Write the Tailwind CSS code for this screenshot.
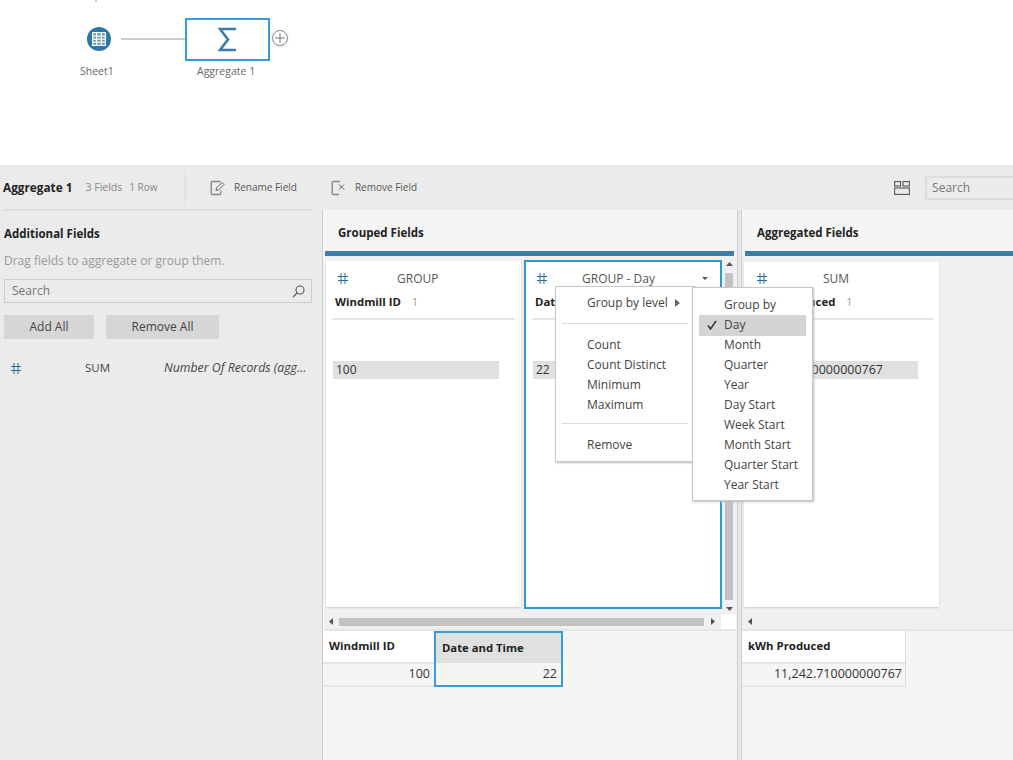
<!DOCTYPE html>
<html lang="en">
  <head>
    <meta charset="UTF-8" />
    <title>Aggregate 1</title>
    <script src="https://cdn.jsdelivr.net/npm/@tailwindcss/browser@4"></script>
  </head>
  <body class="w-[1013px] h-[760px] overflow-hidden bg-white text-[#333] text-[12px] font-['Open_Sans',sans-serif]">
    <!-- Flow canvas -->
    <div class="relative h-[165px] bg-white">
      <div class="absolute left-[95px] top-0 w-[2px] h-[2px] bg-[#ccc]"></div>
      <div class="absolute left-[87px] top-[27px] w-6 h-6 rounded-full bg-[#2e76a3] flex items-center justify-center">
        <svg width="14" height="14" viewBox="0 0 14 14" fill="none" stroke="#fff" stroke-width="1.2">
          <rect x="0.6" y="0.6" width="12.8" height="12.8" fill="#fff" fill-opacity="0.25" />
          <path d="M0 4.2H14M0 7.2H14M0 10.2H14M4.6 0V14M9.4 0V14" />
        </svg>
      </div>
      <div class="absolute left-[121px] top-[38px] w-[65px] h-[2px] bg-[#ccc]"></div>
      <div class="absolute left-[185px] top-[18px] w-[85px] h-[43px] border-2 border-[#3a9bdc] bg-white flex items-center justify-center">
        <svg width="19" height="25" viewBox="0 0 19 25" fill="none" stroke="#3a7ca5" stroke-width="2.6">
          <path d="M18 2H2L10 12.5L2 23H18" />
        </svg>
      </div>
      <div class="absolute left-[272px] top-[30px] w-4 h-4 rounded-full border border-[#888] shadow-sm flex items-center justify-center">
        <svg width="10" height="10" viewBox="0 0 10 10" stroke="#777" stroke-width="1"><path d="M5 0V10M0 5H10" /></svg>
      </div>
      <div class="absolute left-[80px] top-[64px] text-[10.5px] text-[#666]">Sheet1</div>
      <div class="absolute left-[197px] top-[64px] text-[10.5px] text-[#666]">Aggregate 1</div>
    </div>

    <!-- Toolbar -->
    <div class="h-[45px] bg-[#ebebeb] flex items-center whitespace-nowrap">
      <div class="w-[186px] shrink-0 h-[36px] pl-[3px] flex items-center border-r-2 border-[#e3e3e3]">
        <span class="font-bold text-[11.8px] text-[#222]">Aggregate 1</span>
        <span class="ml-[13px] text-[10.5px] text-[#888]">3 Fields</span>
        <span class="ml-[7px] text-[10px] text-[#888]">1 Row</span>
      </div>
      <svg class="ml-[24px] shrink-0" width="16" height="16" viewBox="0 0 16 16" fill="none" stroke="#888" stroke-width="1.4">
        <path d="M10.5 1.5H2.5Q1.2 1.5 1.2 2.8V13.2Q1.2 14.5 2.5 14.5H9.5Q10.8 14.5 10.8 13.2V10.5" />
        <path stroke="#666" stroke-width="1" d="M6 10.5L6.5 8L12 2.5L14 4.5L8.5 10Z" />
      </svg>
      <span class="ml-2 text-[10px] text-[#555]">Rename Field</span>
      <svg class="ml-[34px] shrink-0" width="16" height="16" viewBox="0 0 16 16" fill="none" stroke="#888" stroke-width="1.4">
        <path d="M9 1.5H2.5Q1.2 1.5 1.2 2.8V13.2Q1.2 14.5 2.5 14.5H8" />
        <path stroke="#666" stroke-width="1" d="M8 4.5L13 9.5M13 4.5L8 9.5" />
      </svg>
      <span class="ml-2 text-[10px] text-[#555]">Remove Field</span>
      <svg class="ml-[477px] shrink-0" width="16" height="14" viewBox="0 0 16 14" fill="none" stroke="#555" stroke-width="1.1">
        <rect x="0.6" y="0.6" width="6" height="4.4" />
        <rect x="9" y="0.6" width="6.4" height="4.4" />
        <rect x="0.6" y="7" width="14.8" height="6.4" />
      </svg>
      <div class="ml-[15px] w-[100px] h-[24px] shrink-0 border-2 border-[#dcdcdc] flex items-center pl-[5px] text-[#777]">Search</div>
    </div>

    <!-- Main area -->
    <div class="flex h-[550px]">
      <!-- Additional fields -->
      <div class="w-[322px] shrink-0 bg-[#ebebeb] whitespace-nowrap">
        <div class="ml-[3px] w-[310px] h-[2px] -mt-px bg-[#dedede]"></div>
        <div class="pl-[4px] pt-[14px] font-bold text-[11.5px] text-[#222] leading-[17px]">Additional Fields</div>
        <div class="pl-[4px] pt-[10px] text-[#999] leading-[17px]">Drag fields to aggregate or group them.</div>
        <div class="ml-[4px] mt-[10px] w-[308px] h-[24px] border border-[#ccc] flex items-center justify-between pl-[7px] pr-[6px] text-[#777]">
          <span>Search</span>
          <svg width="13" height="13" viewBox="0 0 13 13" fill="none" stroke="#555" stroke-width="1.1"><circle cx="8" cy="5" r="4" /><path d="M5 8L1 12" /></svg>
        </div>
        <div class="flex pl-[4px] pt-[12px] gap-[12px] text-[#444]">
          <div class="w-[90px] h-[24px] bg-[#d6d6d6] flex items-center justify-center">Add All</div>
          <div class="w-[113px] h-[24px] bg-[#d6d6d6] flex items-center justify-center">Remove All</div>
        </div>
        <div class="flex items-center h-[20px] mt-[19px]">
          <svg class="ml-[11px]" width="10" height="11" viewBox="0 0 10 11" stroke="#2b6f96" stroke-width="1"><path d="M3 0V11M7 0V11M0 3.5H10M0 7.5H10" /></svg>
          <span class="ml-[64px] text-[11.5px] text-[#444]">SUM</span>
          <span class="ml-[54px] italic text-[12.3px] text-[#444]">Number Of Records (agg...</span>
        </div>
      </div>

      <!-- Grouped fields -->
      <div class="w-[415px] shrink-0 border-l border-[#ccc] bg-[#f5f5f5] flex flex-col">
        <div class="h-[40px] mt-px pl-[15px] pt-[4px] flex items-center font-bold text-[11.5px] text-[#222]">Grouped Fields</div>
        <div class="ml-[2px] mr-[3px] h-[5px] bg-[#3d7ca8]"></div>
        <div class="ml-[2px] mr-[1px] h-[358px] bg-[#f0f0f0] flex">
          <div class="w-[195px] h-[346px] mt-[5px] bg-white shadow-[0_1px_2px_#ccc] ml-px">
            <div class="flex items-center h-[30px] mt-[1px] pt-[3px] pl-[12px]">
              <svg width="10" height="11" viewBox="0 0 10 11" stroke="#2b6f96" stroke-width="1"><path d="M3 0V11M7 0V11M0 3.5H10M0 7.5H10" /></svg>
              <span class="ml-[49px] text-[#555]">GROUP</span>
            </div>
            <div class="pl-[9px] pt-[1px] h-[26px] font-bold text-[11.4px] text-[#222] whitespace-nowrap">Windmill ID <span class="ml-2 font-normal text-[10.5px] text-[#999]">1</span></div>
            <div class="mx-[6px] h-[2px] bg-[#e6e6e6]"></div>
            <div class="ml-[7px] mt-[41px] w-[166px] h-[18px] bg-[#e0e0e0] pl-[3px] flex items-center text-[#333]">100</div>
          </div>
          <div class="ml-[3px] w-[198px] h-[349px] mt-[4px] bg-white border-2 border-[#2f97d8]">
            <div class="flex items-center h-[30px] pt-[3px] pl-[11px]">
              <svg width="10" height="11" viewBox="0 0 10 11" stroke="#2b6f96" stroke-width="1"><path d="M3 0V11M7 0V11M0 3.5H10M0 7.5H10" /></svg>
              <span class="ml-[35px] text-[#555]">GROUP - Day</span>
              <svg class="ml-[47px]" width="6" height="3" viewBox="0 0 6 3" fill="#555"><path d="M0 0H6L3 3Z" /></svg>
            </div>
            <div class="pl-[9px] pt-[1px] h-[26px] font-bold text-[11.4px] text-[#222] whitespace-nowrap">Date and Time</div>
            <div class="mx-[6px] h-[2px] bg-[#e6e6e6]"></div>
            <div class="ml-[7px] mt-[41px] w-[166px] h-[18px] bg-[#e0e0e0] pl-[3px] flex items-center text-[#333]">22</div>
          </div>
          <!-- Vertical scrollbar -->
          <div class="ml-px w-[12px] h-[352px] mt-[5px] flex flex-col items-center justify-between">
            <svg class="mt-[1px]" width="7" height="4" viewBox="0 0 7 4" fill="#555"><path d="M0 4H7L3.5 0Z" /></svg>
            <div class="w-[8px] h-[327px] bg-[#c2c2c2]"></div>
            <svg class="mb-[2px]" width="7" height="4" viewBox="0 0 7 4" fill="#555"><path d="M0 0H7L3.5 4Z" /></svg>
          </div>
        </div>
        <!-- Horizontal scrollbar -->
        <div class="ml-[2px] mr-[1px] h-[15px] bg-[#f0f0f0] flex items-center border-b-2 border-[#e6e6e6] box-content">
          <svg class="ml-[4px]" width="4" height="7" viewBox="0 0 4 7" fill="#555"><path d="M4 0V7L0 3.5Z" /></svg>
          <div class="ml-[6px] w-[366px] h-[8px] bg-[#c2c2c2]"></div>
          <svg class="ml-[7px]" width="4" height="7" viewBox="0 0 4 7" fill="#555"><path d="M0 0V7L4 3.5Z" /></svg>
          <div class="ml-[6px] w-[15px] h-[15px] bg-white"></div>
        </div>
        <!-- Grouped profile table -->
        <div class="flex whitespace-nowrap">
          <div class="w-[111px]">
            <div class="h-[31px] bg-white font-bold text-[11.4px] text-[#222] pl-[6px] pb-[2px] flex items-center">Windmill ID</div>
            <div class="h-[25px] border-t-2 border-b-2 border-[#e6e6e6] flex items-center justify-end pr-[4px] text-[12.5px]">100</div>
          </div>
          <div class="w-[129px] h-[56px] border-2 border-[#3a9bdc]">
            <div class="h-[30px] bg-[#e0e0e0] font-bold text-[11.3px] text-[#222] pl-[6px] flex items-center">Date and Time</div>
            <div class="h-[22px] flex items-center justify-end pr-[4px] text-[12.5px]">22</div>
          </div>
        </div>
      </div>

      <!-- Aggregated fields -->
      <div class="w-[276px] shrink-0 border-l border-[#ccc] flex">
        <div class="w-[3px] bg-[#e8e8e8] border-r border-[#ccc] box-content"></div>
        <div class="flex-1 bg-[#f5f5f5] flex flex-col">
          <div class="h-[40px] mt-px pl-[15px] pt-[4px] flex items-center font-bold text-[11.5px] text-[#222]">Aggregated Fields</div>
          <div class="ml-[3px] h-[5px] bg-[#3d7ca8]"></div>
          <div class="h-[358px] bg-[#f0f0f0] pt-[6px]">
            <div class="ml-[2px] w-[195px] h-[345px] bg-white shadow-[0_1px_2px_#ccc]">
              <div class="flex items-center h-[30px] pt-[3px] pl-[13px]">
                <svg width="10" height="11" viewBox="0 0 10 11" stroke="#2b6f96" stroke-width="1"><path d="M3 0V11M7 0V11M0 3.5H10M0 7.5H10" /></svg>
                <span class="ml-[56px] text-[#555]">SUM</span>
              </div>
              <div class="pl-[9px] pt-[1px] h-[26px] font-bold text-[11.4px] text-[#222] whitespace-nowrap">kWh Produced <span class="ml-2 font-normal text-[10.5px] text-[#999]">1</span></div>
              <div class="mx-[6px] h-[2px] bg-[#e6e6e6]"></div>
              <div class="ml-[8px] mt-[41px] w-[166px] h-[18px] bg-[#e0e0e0] pl-[3px] flex items-center text-[12.5px] text-[#333] whitespace-nowrap">11,242.710000000767</div>
            </div>
          </div>
          <div class="h-[15px] bg-[#f0f0f0] flex items-center border-b-2 border-[#e6e6e6] box-content">
            <svg class="ml-[6px]" width="4" height="7" viewBox="0 0 4 7" fill="#555"><path d="M4 0V7L0 3.5Z" /></svg>
          </div>
          <div class="w-[164px] whitespace-nowrap border-r border-[#ddd]">
            <div class="h-[31px] bg-white font-bold text-[11.4px] text-[#222] pl-[6px] pb-[2px] flex items-center">kWh Produced</div>
            <div class="h-[25px] border-t-2 border-b-2 border-[#e6e6e6] flex items-center justify-end pr-[3px] text-[12.5px]">11,242.710000000767</div>
          </div>
        </div>
      </div>
    </div>

    <!-- Field menu -->
    <div class="absolute left-[555px] top-[286px] w-[140px] h-[176px] bg-white border border-[#c8c8c8] shadow-[1px_1px_2px_#bbb] text-[#444]">
      <div class="h-[20px] mt-[6px] pl-[31px] flex items-center">Group by level
        <svg class="ml-[7px]" width="5" height="8" viewBox="0 0 5 8" fill="#666"><path d="M0 0V8L5 4Z" /></svg>
      </div>
      <div class="mx-[6px] mt-[10px] h-px bg-[#ddd]"></div>
      <div class="mt-[11px] pl-[31px] leading-[20px]">
        <div>Count</div>
        <div>Count Distinct</div>
        <div>Minimum</div>
        <div>Maximum</div>
      </div>
      <div class="mx-[6px] mt-[8px] h-px bg-[#ddd]"></div>
      <div class="mt-[11px] pl-[31px] leading-[20px]">Remove</div>
    </div>

    <!-- Group by level submenu -->
    <div class="absolute left-[692px] top-[287px] w-[121px] h-[214px] bg-white border border-[#c8c8c8] shadow-[1px_1px_2px_#bbb] text-[#444] pt-[7px] px-[6px] leading-[20px]">
      <div class="pl-[25px]">Group by</div>
      <div class="relative pl-[25px] bg-[#d4d4d4] -mb-px pb-px">Day
        <svg class="absolute left-[8px] top-[5px]" width="10" height="10" viewBox="0 0 10 10" fill="none" stroke="#333" stroke-width="1.5"><path d="M1 5.5L3.5 9L9 1" /></svg>
      </div>
      <div class="pl-[25px]">Month</div>
      <div class="pl-[25px]">Quarter</div>
      <div class="pl-[25px]">Year</div>
      <div class="pl-[25px]">Day Start</div>
      <div class="pl-[25px]">Week Start</div>
      <div class="pl-[25px]">Month Start</div>
      <div class="pl-[25px]">Quarter Start</div>
      <div class="pl-[25px]">Year Start</div>
    </div>
  </body>
</html>
